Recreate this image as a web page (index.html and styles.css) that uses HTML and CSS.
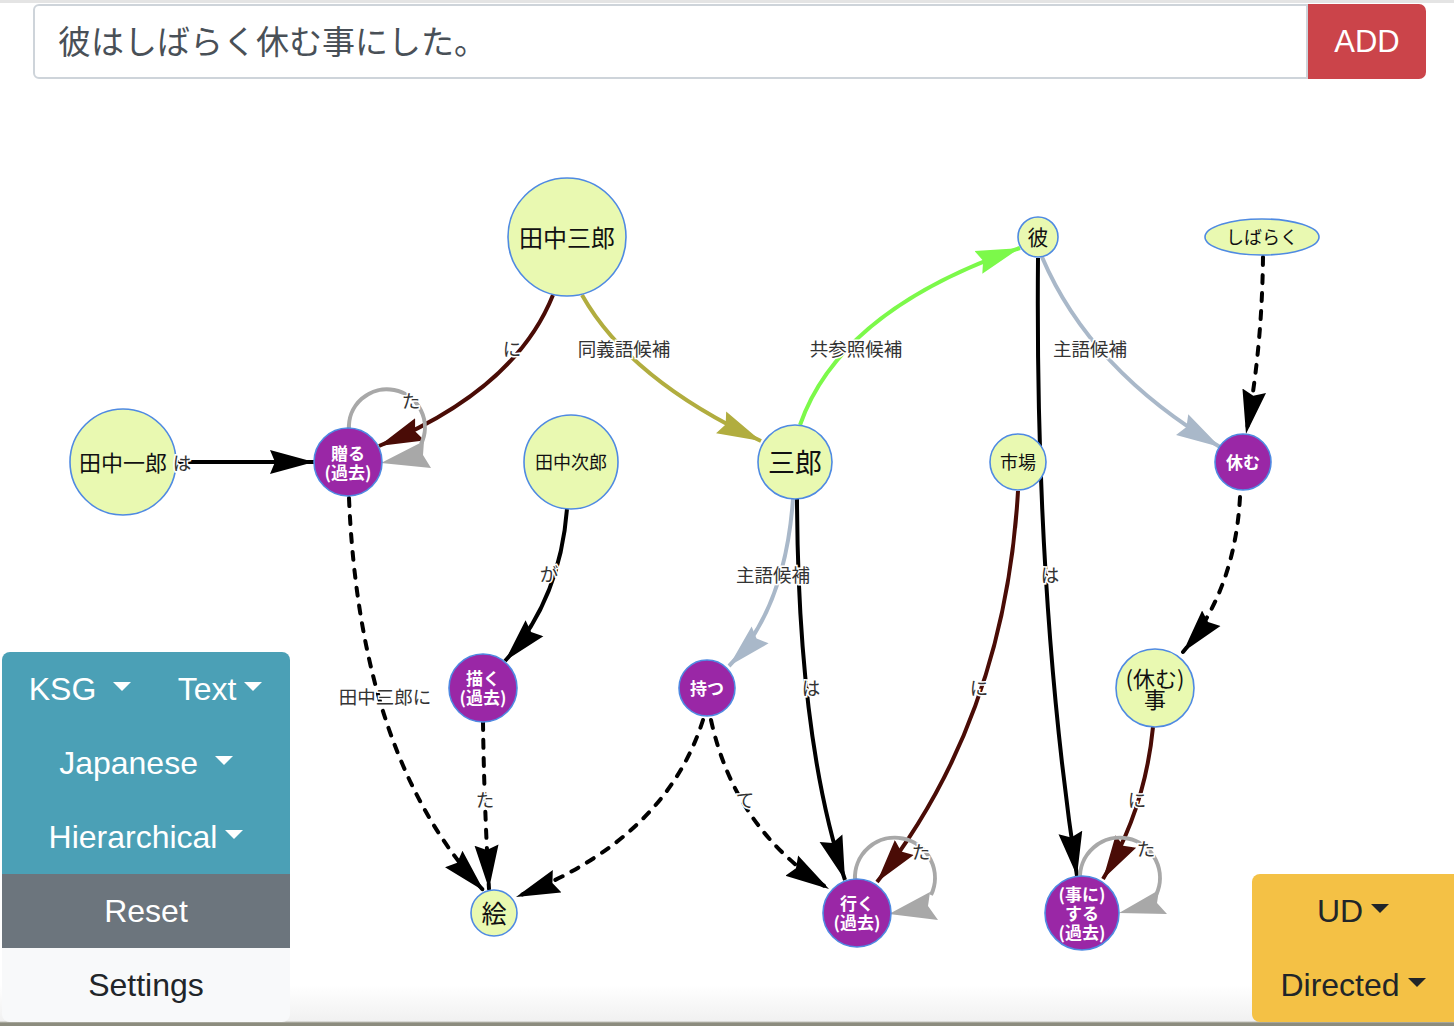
FILE: index.html
```html
<!DOCTYPE html>
<html lang="ja">
<head>
<meta charset="utf-8">
<title>KSG</title>
<link rel="stylesheet" href="styles.css">
</head>
<body>
<div class="page">
  <header class="topbar">
    <div class="input-group">
      <input class="sentence" type="text" value="彼はしばらく休む事にした。">
      <button class="btn-add">ADD</button>
    </div>
  </header>

  <svg class="graph" viewBox="0 80 1454 946" width="1454" height="946" xmlns="http://www.w3.org/2000/svg">
    <defs>
      <marker id="a-black" viewBox="0 0 44 26" markerWidth="44" markerHeight="26" refX="44" refY="13" orient="auto" markerUnits="userSpaceOnUse"><path d="M44,13 L0,1 L5,13 L0,25 Z" fill="#000"/></marker>
      <marker id="a-red" viewBox="0 0 44 26" markerWidth="44" markerHeight="26" refX="44" refY="13" orient="auto" markerUnits="userSpaceOnUse"><path d="M44,13 L0,1 L5,13 L0,25 Z" fill="#4a0c06"/></marker>
      <marker id="a-olive" viewBox="0 0 44 26" markerWidth="44" markerHeight="26" refX="44" refY="13" orient="auto" markerUnits="userSpaceOnUse"><path d="M44,13 L0,1 L5,13 L0,25 Z" fill="#b1ad3f"/></marker>
      <marker id="a-green" viewBox="0 0 44 26" markerWidth="44" markerHeight="26" refX="44" refY="13" orient="auto" markerUnits="userSpaceOnUse"><path d="M44,13 L0,1 L5,13 L0,25 Z" fill="#7cf94a"/></marker>
      <marker id="a-blue" viewBox="0 0 44 26" markerWidth="44" markerHeight="26" refX="44" refY="13" orient="auto" markerUnits="userSpaceOnUse"><path d="M44,13 L0,1 L5,13 L0,25 Z" fill="#a9b8c9"/></marker>
    </defs>

    <!-- edges -->
    <g class="edges">
      <path class="e black" d="M176,462 L314,462" marker-end="url(#a-black)"/>
      <path class="e red" d="M553,295 Q515,390 379,446" marker-end="url(#a-red)"/>
      <path class="e olive" d="M582,295 Q630,380 761,441" marker-end="url(#a-olive)"/>
      <path class="e green" d="M800,425 Q840,310 1020,248" marker-end="url(#a-green)"/>
      <path class="e blue" d="M1042,257 Q1090,370 1220,447" marker-end="url(#a-blue)"/>
      <path class="e black dash" d="M1263,257 Q1262,350 1246,434" marker-end="url(#a-black)"/>
      <path class="e black" d="M1038,258 Q1035,600 1077,876" marker-end="url(#a-black)"/>
      <path class="e black dash" d="M349,498 Q360,760 484,891" marker-end="url(#a-black)"/>
      <path class="e black" d="M567,509 Q560,600 505,661" marker-end="url(#a-black)"/>
      <path class="e blue" d="M793,499 Q785,610 729,666" marker-end="url(#a-blue)"/>
      <path class="e black" d="M797,499 Q798,740 845,880" marker-end="url(#a-black)"/>
      <path class="e red" d="M1018,491 Q1005,720 877,882" marker-end="url(#a-red)"/>
      <path class="e black dash" d="M1240,497 Q1235,590 1183,652" marker-end="url(#a-black)"/>
      <path class="e red" d="M1153,727 Q1145,810 1103,879" marker-end="url(#a-red)"/>
      <path class="e black dash" d="M483,722 Q484,800 489,889" marker-end="url(#a-black)"/>
      <path class="e black dash" d="M703,720 Q665,840 516,897" marker-end="url(#a-black)"/>
      <path class="e black dash" d="M711,720 Q735,830 829,889" marker-end="url(#a-black)"/>

      <!-- self loops -->
      <path class="e loop" d="M349,430 A38,38 0 1 1 421,444"/>
      <polygon class="loop-head" points="381,463 424,441 423,455 431,468"/>
      <path class="e loop" d="M855,880 A40,40 0 1 1 931,895"/>
      <polygon class="loop-head" points="889,914 930,892 928,906 938,920"/>
      <path class="e loop" d="M1080,880 A40,40 0 1 1 1156,895"/>
      <polygon class="loop-head" points="1119,913 1159,890 1157,903 1167,914"/>
    </g>

    <!-- nodes -->
    <g class="nodes">
      <circle class="n-y" cx="567" cy="237" r="59"/>
      <text class="t-y" x="567" y="236" font-size="24">田中三郎</text>

      <circle class="n-y" cx="1038" cy="237" r="20"/>
      <text class="t-y" x="1038" y="236" font-size="21">彼</text>

      <ellipse class="n-y" cx="1262" cy="237" rx="57" ry="18"/>
      <text class="t-y" x="1262" y="236" font-size="18">しばらく</text>

      <circle class="n-y" cx="123" cy="462" r="53"/>
      <text class="t-y" x="123" y="461" font-size="22">田中一郎</text>

      <circle class="n-p" cx="348" cy="462" r="34"/>
      <text class="t-p" x="348" font-size="17"><tspan x="348" y="452">贈る</tspan><tspan x="348" y="471">(過去)</tspan></text>

      <circle class="n-y" cx="571" cy="462" r="47"/>
      <text class="t-y" x="571" y="461" font-size="18">田中次郎</text>

      <circle class="n-y" cx="795" cy="462" r="37"/>
      <text class="t-y" x="795" y="461" font-size="27">三郎</text>

      <circle class="n-y" cx="1018" cy="462" r="28"/>
      <text class="t-y" x="1018" y="461" font-size="18">市場</text>

      <circle class="n-p" cx="1243" cy="462" r="28"/>
      <text class="t-p" x="1243" y="461" font-size="17">休む</text>

      <circle class="n-p" cx="483" cy="688" r="34"/>
      <text class="t-p" x="483" font-size="17"><tspan x="483" y="677">描く</tspan><tspan x="483" y="696">(過去)</tspan></text>

      <circle class="n-p" cx="707" cy="688" r="28"/>
      <text class="t-p" x="707" y="687" font-size="17">持つ</text>

      <circle class="n-y" cx="1155" cy="688" r="39"/>
      <text class="t-y" x="1155" font-size="22"><tspan x="1155" y="677">(休む)</tspan><tspan x="1155" y="698">事</tspan></text>

      <circle class="n-y" cx="494" cy="913" r="23"/>
      <text class="t-y" x="494" y="912" font-size="25">絵</text>

      <circle class="n-p" cx="857" cy="913" r="34"/>
      <text class="t-p" x="857" font-size="17"><tspan x="857" y="902">行く</tspan><tspan x="857" y="921">(過去)</tspan></text>

      <circle class="n-p" cx="1082" cy="913" r="37"/>
      <text class="t-p" x="1082" font-size="17"><tspan x="1082" y="893">(事に)</tspan><tspan x="1082" y="912">する</tspan><tspan x="1082" y="931">(過去)</tspan></text>
    </g>

    <!-- edge labels -->
    <g class="labels">
      <text x="182" y="462">は</text>
      <text x="512" y="348">に</text>
      <text x="624" y="348">同義語候補</text>
      <text x="856" y="348">共参照候補</text>
      <text x="1090" y="348">主語候補</text>
      <text x="411" y="400">た</text>
      <text x="385" y="696">田中三郎に</text>
      <text x="549" y="573">が</text>
      <text x="773" y="574">主語候補</text>
      <text x="811" y="687">は</text>
      <text x="979" y="687">に</text>
      <text x="1050" y="574">は</text>
      <text x="1137" y="799">に</text>
      <text x="485" y="799">た</text>
      <text x="745" y="799">て</text>
      <text x="921" y="851">た</text>
      <text x="1146" y="848">た</text>
    </g>
  </svg>

  <div class="panel-left">
    <div class="row row-split info">
      <div class="dd">KSG&nbsp;<span class="caret"></span></div>
      <div class="dd">Text<span class="caret"></span></div>
    </div>
    <div class="row info">Japanese&nbsp;<span class="caret"></span></div>
    <div class="row info">Hierarchical<span class="caret"></span></div>
    <div class="row secondary">Reset</div>
    <div class="row light">Settings</div>
  </div>

  <div class="panel-right">
    <div class="row">UD<span class="caret"></span></div>
    <div class="row">Directed<span class="caret"></span></div>
  </div>
</div>
</body>
</html>
```

FILE: styles.css
```css
html, body {
  margin: 0;
  padding: 0;
}

body {
  width: 1454px;
  height: 1026px;
  overflow: hidden;
  font-family: "Liberation Sans", Arial, sans-serif;
  background: linear-gradient(to bottom, #ffffff 0, #ffffff 985px, #f1f1f1 1021px, #8c8c7e 1023px, #8c8c7e 1026px);
}

.page {
  position: relative;
  height: 1026px;
  box-sizing: border-box;
  border-top: 3px solid #e4e4e4;
}

.topbar {
  height: 77px;
  box-sizing: border-box;
  padding: 1px 28px 0 33px;
  display: flex;
  align-items: flex-start;
}

.input-group {
  flex: 1;
  display: flex;
  height: 75px;
}

.sentence {
  flex: 1;
  min-width: 0;
  height: 75px;
  box-sizing: border-box;
  margin: 0;
  border: 2px solid #ced4da;
  border-radius: 6px 0 0 6px;
  padding: 0 0 4px 23px;
  font-family: "Noto Sans CJK JP", sans-serif;
  font-size: 33px;
  color: #495057;
  background: #fff;
  outline: none;
}

.btn-add {
  width: 118px;
  height: 75px;
  margin: 0;
  border: 0;
  border-radius: 0 7px 7px 0;
  background: #cb444a;
  color: #fff;
  font-family: "Liberation Sans", Arial, sans-serif;
  font-size: 31px;
  padding: 0;
}

.graph {
  display: block;
}

.e {
  fill: none;
  stroke-width: 4;
}

.black { stroke: #000; }
.red { stroke: #4a0c06; }
.olive { stroke: #b1ad3f; }
.green { stroke: #7cf94a; }
.blue { stroke: #a9b8c9; }

.dash {
  stroke-dasharray: 8 10;
  stroke-linecap: round;
}

.loop {
  stroke: #a8a8a8;
}

.loop-head {
  fill: #a8a8a8;
}

.n-y {
  fill: #e9f9b1;
  stroke: #4f8ae2;
  stroke-width: 1.6;
}

.n-p {
  fill: #9a27a6;
  stroke: #4f8ae2;
  stroke-width: 1.6;
}

.t-y, .t-p {
  font-family: "Noto Sans CJK JP", sans-serif;
  text-anchor: middle;
  dominant-baseline: central;
}

.t-y {
  fill: #111;
}

.t-p {
  fill: #fff;
  font-weight: 700;
}

.labels text {
  font-family: "Noto Sans CJK JP", sans-serif;
  font-size: 18.5px;
  fill: #333;
  stroke: #fff;
  stroke-width: 3px;
  paint-order: stroke;
  text-anchor: middle;
  dominant-baseline: central;
}

.panel-left {
  position: absolute;
  left: 2px;
  bottom: 4px;
  width: 288px;
  display: flex;
  flex-direction: column;
  border-radius: 8px;
  overflow: hidden;
}

.row {
  height: 74px;
  display: flex;
  align-items: center;
  justify-content: center;
  font-size: 32px;
  white-space: nowrap;
}

.row-split .dd {
  flex: 1;
  height: 100%;
  display: flex;
  align-items: center;
  justify-content: center;
}

.row-split .dd:first-child {
  padding-left: 8px;
}

.info {
  background: #4ba0b6;
  color: #fff;
}

.secondary {
  background: #6c757d;
  color: #fff;
}

.light {
  background: #f8f9fa;
  color: #212529;
}

.caret {
  display: inline-block;
  margin-left: 8px;
  width: 0;
  height: 0;
  border-top: 9px solid currentColor;
  border-left: 9px solid transparent;
  border-right: 9px solid transparent;
  position: relative;
  top: -3px;
}

.panel-right {
  position: absolute;
  right: 0;
  bottom: 4px;
  width: 202px;
  border-radius: 8px 0 0 8px;
  background: #f4c145;
  color: #212529;
  display: flex;
  flex-direction: column;
}
```
